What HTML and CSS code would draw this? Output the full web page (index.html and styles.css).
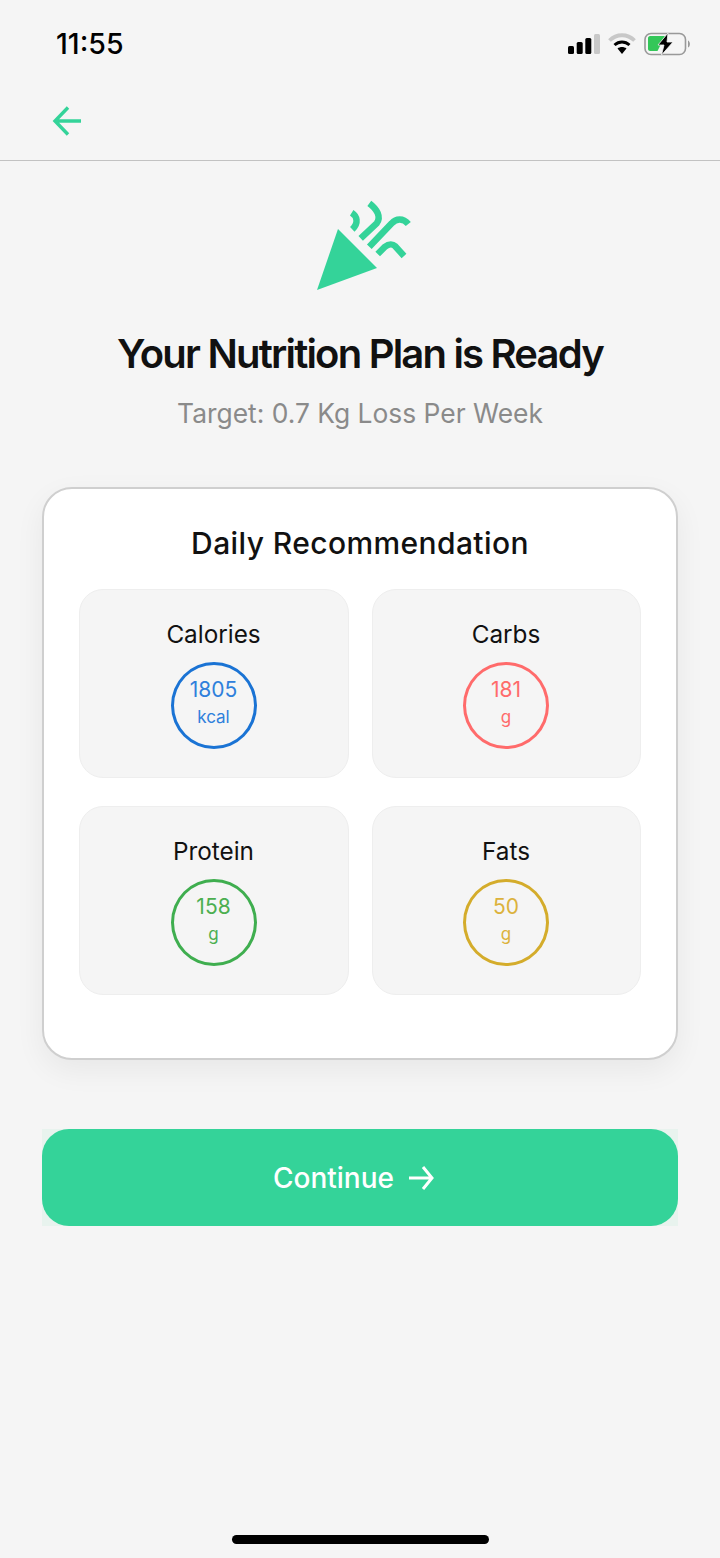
FILE: index.html
```html
<!DOCTYPE html>
<html lang="en">
<head>
    <meta charset="UTF-8">
    <title>Your Nutrition Plan is Ready</title>
    <link rel="stylesheet" href="styles.css">
</head>
<body>

<div class="screen">
    <!-- Status bar -->
    <div class="status-bar">
        <span class="time">11:55</span>
        <div class="status-icons">
            <svg width="32" height="22" viewBox="0 0 32 22">
                <rect x="0" y="13" width="6" height="8" rx="1.500" fill="#000"/>
                <rect x="8.700" y="9" width="6" height="12" rx="1.500" fill="#000"/>
                <rect x="17.300" y="5" width="6" height="16" rx="1.500" fill="#000"/>
                <rect x="26" y="1" width="6" height="20" rx="1.500" fill="#c8c8c8"/>
            </svg>
            <svg width="28" height="22" viewBox="0 0 28 22">
                <path d="M1.500 7.500C8.500 0.500 19.500 0.500 26.500 7.500" fill="none" stroke="#c8c8c8" stroke-width="3.800"/>
                <path d="M6.500 12C11 8 17 8 21.500 12" fill="none" stroke="#000" stroke-width="3"/>
                <path d="M9.500 15.500C12 13.500 16 13.500 18.500 15.500L14 21Z" fill="#000"/>
            </svg>
            <svg width="47" height="24" viewBox="0 0 47 24">
                <rect x="1" y="1.500" width="40.500" height="21" rx="6" fill="none" stroke="#999" stroke-width="1.600"/>
                <path d="M44 8.500C46.500 9.500 46.500 14.500 44 15.500Z" fill="#999"/>
                <path d="M4 6C4 5 5 4 6 4H21L13.500 19H6C5 19 4 18 4 17Z" fill="#34c759"/>
                <path d="M24 1L14 13H20L17.500 23L29 10H23Z" fill="#000" stroke="#f5f5f5" stroke-width="0.800"/>
            </svg>
        </div>
    </div>

    <!-- Nav -->
    <div class="nav">
        <svg width="30" height="30" viewBox="0 0 30 30">
            <path d="M29 15H3M16 1.500L3 15L16 28.500" fill="none" stroke="#34d399" stroke-width="3.400"/>
        </svg>
    </div>

    <div class="content">
        <svg class="logo" width="96" height="92" viewBox="0 0 96 92">
            <path d="M22 29L61 68L1 90Z" fill="#34d399"/>
            <g fill="none" stroke="#34d399" stroke-width="6.500">
                <path d="M35.700 12.700C41 16 43 23 36.300 29.300"/>
                <path d="M53.300 3.300C61 9 65.500 17 60.700 23.300L44.700 38.300"/>
                <path d="M53.300 46.700L75.700 23.300C80 18.500 87 17.500 92.300 24"/>
                <path d="M61.700 54L69 46.700C73 43.500 77 44 79 46L88 56"/>
            </g>
        </svg>

        <h1>Your Nutrition Plan is Ready</h1>
        <p class="target">Target: 0.7 Kg Loss Per Week</p>

        <div class="card">
            <h2>Daily Recommendation</h2>
            <div class="macro-grid">
                <div class="macro">
                    <span class="macro-name">Calories</span>
                    <div class="ring ring-blue"><span class="amount">1805</span><span class="unit">kcal</span></div>
                </div>
                <div class="macro">
                    <span class="macro-name">Carbs</span>
                    <div class="ring ring-red"><span class="amount">181</span><span class="unit">g</span></div>
                </div>
                <div class="macro">
                    <span class="macro-name">Protein</span>
                    <div class="ring ring-green"><span class="amount">158</span><span class="unit">g</span></div>
                </div>
                <div class="macro">
                    <span class="macro-name">Fats</span>
                    <div class="ring ring-yellow"><span class="amount">50</span><span class="unit">g</span></div>
                </div>
            </div>
        </div>

        <div class="continue-wrap">
            <button class="continue-btn" type="button">
                Continue
                <svg width="26" height="24" viewBox="0 0 26 24">
                    <path d="M1 12H24M15 1L24 12L15 23" fill="none" stroke="#fff" stroke-width="3"/>
                </svg>
            </button>
        </div>
    </div>

    <div class="home-indicator"></div>
</div>

</body>
</html>
```

FILE: styles.css
```css
* {
    box-sizing: border-box;
}

body {
    font-family: 'Inter', sans-serif;
    background-color: #f5f5f5;
    margin: 0;
    padding: 0;
}

.screen {
    height: 1558px;
    display: flex;
    flex-direction: column;
    position: relative;
    overflow: hidden;
}

.status-bar {
    height: 80px;
    padding: 7px 29px 0 56px;
    display: flex;
    justify-content: space-between;
    align-items: center;
}

.time {
    font-size: 28.5px;
    font-weight: 500;
    color: #000;
}

.status-icons {
    display: flex;
    align-items: center;
    gap: 8px;
}

.nav {
    height: 81px;
    padding: 26px 0 0 52px;
    border-bottom: 1px solid #c2c2c2;
}

.content {
    padding: 0 42px;
    display: flex;
    flex-direction: column;
    align-items: center;
}

.logo {
    margin: 39px 0 0 8px;
}

h1 {
    margin: 37px 0 0;
    font-size: 40px;
    font-weight: 600;
    line-height: 50px;
    letter-spacing: -1.8px;
    color: #111;
}

.target {
    margin: 17px 0 0;
    font-size: 26.4px;
    line-height: 34px;
    color: #8a8a8a;
}

.card {
    width: 636px;
    height: 573px;
    margin-top: 57px;
    padding: 34px 35px 0;
    background-color: #fff;
    border: 2px solid #cfcfcf;
    border-radius: 30px;
    box-shadow: 0 10px 30px rgba(0, 0, 0, 0.06);
}

h2 {
    margin: 0;
    text-align: center;
    font-size: 30px;
    font-weight: 500;
    line-height: 40px;
    letter-spacing: 0.4px;
    color: #111;
}

.macro-grid {
    margin-top: 26px;
    display: grid;
    grid-template-columns: 270px 269px;
    grid-auto-rows: 189px;
    gap: 28px 23px;
}

.macro {
    background-color: #f5f5f5;
    border: 1px solid #eeeeee;
    border-radius: 24px;
    padding: 27px 1px 0 0;
    display: flex;
    flex-direction: column;
    align-items: center;
}

.macro-name {
    font-size: 24.3px;
    line-height: 34px;
    color: #111;
}

.ring {
    width: 86px;
    height: 87px;
    margin-top: 11px;
    border-radius: 50%;
    border: 3px solid;
    display: flex;
    flex-direction: column;
    align-items: center;
    padding-top: 11px;
}

.amount {
    font-size: 21px;
    line-height: 28px;
}

.unit {
    font-size: 17px;
    line-height: 26px;
}

.ring-blue { border-color: #1a73d4; color: #2f80dc; }
.ring-red { border-color: #ff6b6b; color: #ff6b6b; }
.ring-green { border-color: #3fae4f; color: #4caf50; }
.ring-yellow { border-color: #d4ac2b; color: #dcb23c; }

/* pale square behind the button corners */
.continue-wrap {
    width: 636px;
    height: 97px;
    margin-top: 69px;
    background-color: #e8f3ee;
}

.continue-btn {
    width: 100%;
    height: 100%;
    padding: 0 13px 0 0;
    background-color: #34d399;
    border: none;
    border-radius: 27px;
    color: #fff;
    font-family: inherit;
    font-size: 28px;
    font-weight: 500;
    display: flex;
    justify-content: center;
    align-items: center;
    gap: 14px;
}

.home-indicator {
    position: absolute;
    left: 232px;
    bottom: 14px;
    width: 257px;
    height: 9px;
    border-radius: 5px;
    background-color: #000;
}
```
